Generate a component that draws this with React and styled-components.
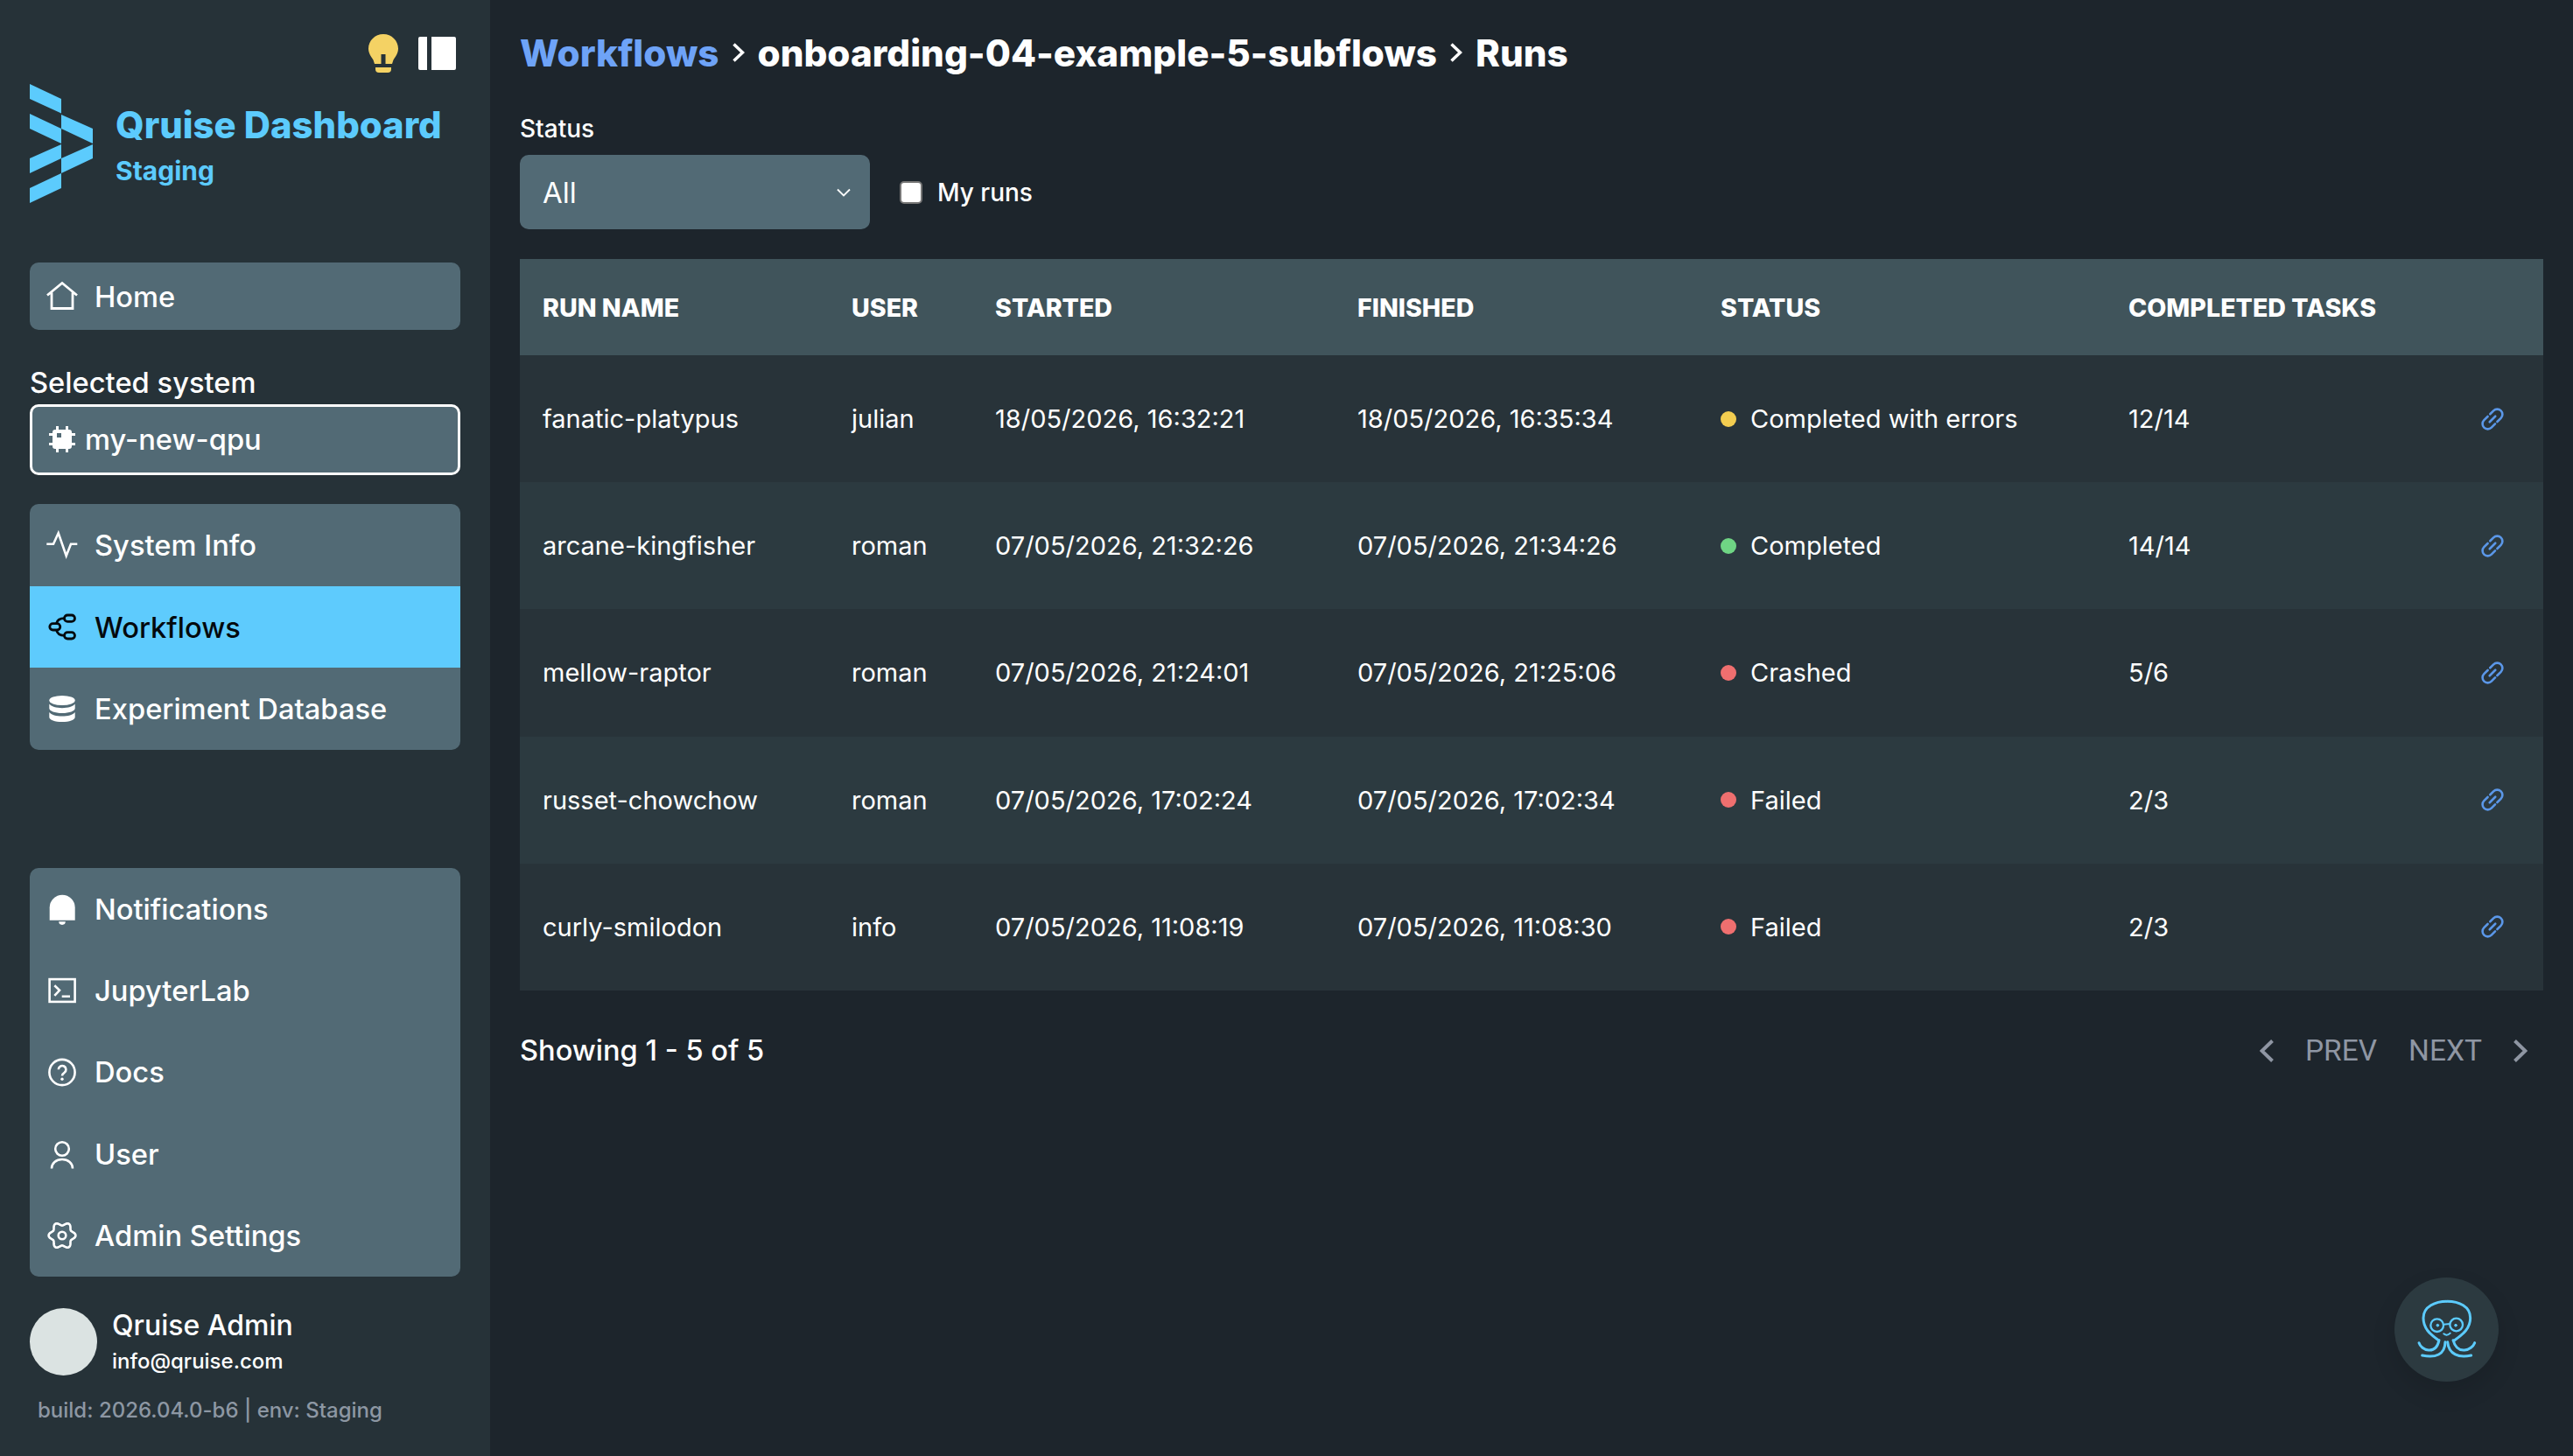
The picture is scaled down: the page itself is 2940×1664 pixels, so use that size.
import React from "react";
import styled, { createGlobalStyle } from "styled-components";

const Global = createGlobalStyle`
  html, body { margin: 0; padding: 0; background: #1d252c; }
  * { box-sizing: border-box; }
  body { font-family: Inter, "Noto Sans", sans-serif; color: #fff; overflow: hidden; }
`;

const Page = styled.div`
  width: 2940px; height: 1664px; display: grid; grid-template-columns: 560px 1fr; position: relative;
`;
const Sidebar = styled.aside`
  background: #263238; padding: 39px 34px 0; display: flex; flex-direction: column;
`;
const TopIcons = styled.div`
  display: flex; justify-content: flex-end; align-items: center; gap: 23px; height: 44px; padding-right: 5px;
`;
const Brand = styled.div`
  display: flex; gap: 26px; margin-top: 13px; height: 136px; align-items: flex-start;
`;
const BrandText = styled.div`
  display: flex; flex-direction: column; padding-top: 21px;
`;
const BrandTitle = styled.div`
  font-size: 41.800px; font-weight: 800; line-height: 52px; color: #5ccbfd; white-space: nowrap;
`;
const BrandSub = styled.div`
  font-size: 30px; font-weight: 700; line-height: 38px; margin-top: 7px; color: #5ccbfd;
`;
const NavGroup = styled.nav`
  background: #526a75; border-radius: 10px; overflow: hidden; display: flex; flex-direction: column;
  margin-top: ${p => p.$top}px;
`;
const NavItem = styled.div`
  height: ${p => p.$h}px; display: flex; align-items: center; gap: 17px; padding-left: 17px;
  font-size: 32.700px; font-weight: 500; white-space: nowrap;
  background: ${p => (p.$active ? "#5ecbfd" : "transparent")};
  color: ${p => (p.$active ? "#04090d" : "#fff")};
`;
const SysLabel = styled.div`
  margin-top: 40px; margin-bottom: 5px; line-height: 40px; font-size: 32.700px; font-weight: 500;
`;
const SysBox = styled.div`
  height: 81px; background: #526a75; border: 3px solid #fff; border-radius: 10px;
  display: flex; align-items: center; gap: 11px; padding-left: 19px; padding-bottom: 1px; font-size: 32.700px; font-weight: 500;
`;
const UserRow = styled.div`
  display: flex; gap: 17px; align-items: center; margin-top: 35px;
`;
const Avatar = styled.div`
  width: 77px; height: 77px; border-radius: 50%; background: #dbe3e2;
`;
const UserText = styled.div`
  display: flex; flex-direction: column;
`;
const UserName = styled.div`
  font-size: 32px; font-weight: 500; line-height: 42px;
`;
const UserMail = styled.div`
  font-size: 24px; font-weight: 500; line-height: 36px; margin-top: 2px;
`;
const Build = styled.div`
  margin-top: 23px; padding-left: 9px; font-size: 24px; font-weight: 500; line-height: 30px; color: #8d97a3; white-space: nowrap;
`;
const Main = styled.main`
  padding: 30px 34px 0; display: flex; flex-direction: column; background: #1d252c;
`;
const Crumbs = styled.div`
  display: flex; align-items: center; height: 60px; gap: 15px; font-size: 42.200px; font-weight: 800; white-space: nowrap;
`;
const CrumbLink = styled.span`
  color: #6ea3f7;
`;
const FilterLabel = styled.div`
  margin-top: 39px; line-height: 36px; font-size: 28px; font-weight: 500;
`;
const Filters = styled.div`
  display: flex; align-items: center; gap: 34px; margin-top: 12px;
`;
const SelectBox = styled.div`
  width: 400px; height: 85px; background: #526a75; border-radius: 10px; display: flex; align-items: center;
  justify-content: space-between; padding: 0 22px 0 26px; font-size: 33px; font-weight: 400;
`;
const Check = styled.label`
  display: flex; align-items: center; gap: 17px; font-size: 28px; font-weight: 500;
`;
const CheckInput = styled.input`
  appearance: none; margin: 0; width: 26px; height: 26px; background: #fff; border: 2px solid #767676; border-radius: 5px;
`;
const Table = styled.table`
  margin-top: 34px; width: 100%; border-collapse: collapse; table-layout: fixed;
`;
const Col = styled.col`
  width: ${p => p.$w}px;
`;
const HeadRow = styled.tr`
  height: 110px; background: #40545b;
`;
const Th = styled.th`
  padding: 0 0 0 26px; text-align: left; font-size: 28.600px; font-weight: 800; white-space: nowrap;
`;
const Row = styled.tr`
  height: 145.200px; background: ${p => (p.$even ? "#2c3a40" : "#283339")};
`;
const Td = styled.td`
  padding: 0 0 0 26px; font-size: 29px; font-weight: 400; white-space: nowrap;
`;
const LinkTd = styled.td`
  padding: 0 45px 0 0;
  svg { margin-left: auto; }
`;
const StatusCell = styled.div`
  display: flex; align-items: center; gap: 16px;
`;
const Dot = styled.span`
  width: 18px; height: 18px; border-radius: 50%; background: ${p => p.$c};
`;
const Foot = styled.div`
  margin-top: 48px; height: 40px; display: flex; justify-content: space-between; align-items: center; padding-right: 18px;
`;
const Showing = styled.div`
  font-size: 32.600px; font-weight: 500;
`;
const Pager = styled.div`
  display: flex; align-items: center; gap: 36px; font-family: Roboto, sans-serif; font-size: 33.500px; color: #8f96a3; margin-top: 2px;
`;
const Fab = styled.div`
  position: absolute; right: 85px; bottom: 85px; width: 119px; height: 119px; border-radius: 50%;
  background: #2c3a40; display: flex; align-items: center; justify-content: center;
  box-shadow: 0 12px 28px rgba(0,0,0,.12);
`;
const IconSvg = styled.svg`
  flex: none; display: block;
`;

const Icon = ({ children, size = 40, vb = "0 0 40 40", sw = 2.8, c = "currentColor" }) => (
  <IconSvg width={size} height={size} viewBox={vb} fill="none" stroke={c} strokeWidth={sw} strokeLinecap="butt" strokeLinejoin="miter">
    {children}
  </IconSvg>
);

const HomeI = () => <Icon><path d="M3 18.5 20 4.5 37 18.5M8 15.5V33.5H32V15.5" /></Icon>;
const PulseI = () => <Icon sw={2.6}><path d="M2.3 18.8H10L15.7 6.2 24.7 32.2 30 18.8H37.3" /></Icon>;
const FlowI = () => (
  <Icon>
    <rect x="22.5" y="6" width="12" height="7.4" rx="3.7" />
    <rect x="5.8" y="15.6" width="12" height="7.4" rx="3.7" />
    <rect x="22.5" y="25.6" width="12" height="7.4" rx="3.7" />
    <path d="M13.5 15.6C14.5 11 17.5 9.7 22.5 9.7M13.5 23C14.5 27.6 17.5 29.3 22.5 29.3" />
  </Icon>
);
const DbI = () => (
  <Icon sw={0}>
    <g fill="currentColor" stroke="none">
      <ellipse cx="20" cy="10.5" rx="14.7" ry="5.6" />
      <path d="M5.3 14.6V19.5C5.3 22.5 11.8 25 20 25S34.7 22.5 34.7 19.5V14.6C32.5 17.8 26.5 19.2 20 19.2S7.500 17.800 5.300 14.600Z" />
      <path d="M5.3 24V29.4C5.300 32.500 11.800 35 20 35S34.700 32.500 34.700 29.400V24C32.500 27.200 26.500 28.600 20 28.600S7.500 27.200 5.300 24Z" />
    </g>
  </Icon>
);
const BellI = () => (
  <Icon sw={0}>
    <g fill="currentColor" stroke="none">
      <path d="M5.700 32.700V18.200A14.500 14.500 0 0 1 34.700 18.200V32.700Z" />
      <path d="M16.200 34.300H23.800A3.800 3.600 0 0 1 16.200 34.300Z" />
    </g>
  </Icon>
);
const TermI = () => <Icon sw={2.6}><rect x="5.600" y="7.100" width="29" height="25.800" /><path d="M11.300 14.200 17 19.800 11.300 25.800M19.700 26.800H29" /></Icon>;
const HelpI = () => (
  <Icon sw={2.6}>
    <circle cx="20" cy="20.500" r="14.600" />
    <path d="M15.800 17.200A4.300 4.300 0 1 1 22.600 20.800C21 21.800 20 22.800 20 24.600" />
    <circle cx="20" cy="28.200" r="1.700" fill="currentColor" stroke="none" />
  </Icon>
);
const UserI = () => (
  <Icon sw={2.6}>
    <circle cx="20" cy="14" r="7.800" />
    <path d="M8 36.500C8 30.500 13 26 20 26S32 30.500 32 36.500" />
  </Icon>
);
const gearPath = (() => {
  const pts = [];
  for (let i = 0; i < 120; i++) {
    const t = (i / 120) * Math.PI * 2;
    const r = 13.4 + 2 * Math.cos(6 * t);
    pts.push(`${(20 + r * Math.cos(t)).toFixed(2)} ${(20 + r * Math.sin(t)).toFixed(2)}`);
  }
  return `M${pts.join("L")}Z`;
})();
const GearI = () => <Icon sw={2.600}><path d={gearPath} /><circle cx="20" cy="20" r="4.300" /></Icon>;
const ChipI = () => (
  <Icon size={30} vb="0 0 30 30" sw={0}>
    <g fill="currentColor" stroke="none">
      <path fillRule="evenodd" d="M7 4H23A3 3 0 0 1 26 7V23A3 3 0 0 1 23 26H7A3 3 0 0 1 4 23V7A3 3 0 0 1 7 4ZM9 8V13H14V8Z" />
      <path d="M8 0H11V4H8ZM19 0H22V4H19ZM8 26H11V30H8ZM19 26H22V30H19ZM0 8H4V11H0ZM0 19H4V22H0ZM26 8H30V11H26ZM26 19H30V22H26Z" />
    </g>
  </Icon>
);
const LinkI = () => (
  <Icon size={26} vb="1 1 24 24" sw={2.4} c="#5b97e8">
    <path strokeLinecap="round" d="M10.500 7.700 14.100 4.100A5.500 5.500 0 0 1 21.900 11.900L18 15.800M8 10.200 4.100 14.100A5.500 5.500 0 0 0 11.900 21.900L15.800 18M10 16 16 10" />
  </Icon>
);
const Chev = ({ dir = "right", h = 26, w = 16, sw = 4, c = "currentColor" }) => (
  <IconSvg width={w} height={h} viewBox={`0 0 ${w} ${h}`} fill="none" stroke={c} strokeWidth={sw}>
    {dir === "right"
      ? <path d={`M1.500 1.500 ${w - 2.500} ${h / 2} 1.500 ${h - 1.500}`} />
      : <path d={`M${w - 1.500} 1.500 2.500 ${h / 2} ${w - 1.500} ${h - 1.500}`} />}
  </IconSvg>
);
const SelectChev = () => (
  <IconSvg width="16" height="10" viewBox="0 0 16 10" fill="none" stroke="#fff" strokeWidth="1.800">
    <path d="M1 1.500 8 8.500 15 1.500" />
  </IconSvg>
);

const Logo = () => (
  <IconSvg width="72" height="136" viewBox="34 96 72 136" fill="#5ccbfd">
    <polygon points="34,96 70,113 70,129.500 34,113" />
    <polygon points="34,130 70,147 70,164 34,147" />
    <polygon points="70,131 106,147 106,164 70,147" />
    <polygon points="106,165 106,181 70,198 70,181" />
    <polygon points="70,165 70,181 34,198 34,181" />
    <polygon points="70,198 70,215 34,232 34,215" />
  </IconSvg>
);
const Bulb = () => (
  <IconSvg width="34" height="44" viewBox="0 0 34 44" fill="#f4d264">
    <path fillRule="evenodd" d="M17 0C26.500 0 34 7.500 34 16.500C34 21.500 31.500 25 28.500 29.500L27 34H19.500V23H14.500V34H7L5.500 29.500C2.500 25 0 21.500 0 16.500C0 7.500 7.500 0 17 0Z" />
    <path d="M8 38H26V40A4 4 0 0 1 22 44H12A4 4 0 0 1 8 40Z" />
  </IconSvg>
);
const PanelIcon = () => (
  <IconSvg width="43" height="38" viewBox="0 0 43 38" fill="#fff">
    <path d="M2 0H10V38H2A2 2 0 0 1 0 36V2A2 2 0 0 1 2 0ZM15 0H41A2 2 0 0 1 43 2V36A2 2 0 0 1 41 38H15Z" />
  </IconSvg>
);
const Octopus = () => (
  <IconSvg width="74" height="74" viewBox="778 1000 222 222" fill="none" stroke="#5ccbfd" strokeWidth="9" strokeLinecap="round">
    <path d="M860 1146C830 1125 808 1105 808 1070C808 1030 850 1013 890 1013C930 1013 969 1030 969 1070C969 1105 945 1125 915 1146" />
    <path d="M793 1155C800 1180 850 1200 862 1146" />
    <path d="M804 1198C850 1208 882 1195 883 1152" />
    <path d="M984 1155C975 1180 925 1200 910 1146" />
    <path d="M972 1198C930 1208 895 1195 891 1152" />
    <circle cx="855" cy="1095" r="22" strokeWidth="7" />
    <circle cx="921" cy="1093" r="22" strokeWidth="7" />
    <circle cx="857" cy="1095" r="4" fill="#5ccbfd" strokeWidth="3" />
    <circle cx="919" cy="1095" r="4" fill="#5ccbfd" strokeWidth="3" />
    <path d="M877 1092 899 1090M878 1124Q889 1133 900 1122" strokeWidth="6" />
  </IconSvg>
);

const runs = [
  ["fanatic-platypus", "julian", "18/05/2026, 16:32:21", "18/05/2026, 16:35:34", "#f3cd50", "Completed with errors", "12/14"],
  ["arcane-kingfisher", "roman", "07/05/2026, 21:32:26", "07/05/2026, 21:34:26", "#6fd584", "Completed", "14/14"],
  ["mellow-raptor", "roman", "07/05/2026, 21:24:01", "07/05/2026, 21:25:06", "#ef6f6f", "Crashed", "5/6"],
  ["russet-chowchow", "roman", "07/05/2026, 17:02:24", "07/05/2026, 17:02:34", "#ef6f6f", "Failed", "2/3"],
  ["curly-smilodon", "info", "07/05/2026, 11:08:19", "07/05/2026, 11:08:30", "#ef6f6f", "Failed", "2/3"],
];
const colWidths = [353, 164, 414, 415, 466, 405, 95];

export default function App() {
  return (
    <Page>
      <Global />
      <Sidebar>
        <TopIcons><Bulb /><PanelIcon /></TopIcons>
        <Brand>
          <Logo />
          <BrandText>
            <BrandTitle>Qruise Dashboard</BrandTitle>
            <BrandSub>Staging</BrandSub>
          </BrandText>
        </Brand>
        <NavGroup $top={68}>
          <NavItem $h={77}><HomeI />Home</NavItem>
        </NavGroup>
        <SysLabel>Selected system</SysLabel>
        <SysBox><ChipI />my-new-qpu</SysBox>
        <NavGroup $top={33}>
          <NavItem $h={94}><PulseI />System Info</NavItem>
          <NavItem $h={93} $active><FlowI />Workflows</NavItem>
          <NavItem $h={94}><DbI />Experiment Database</NavItem>
        </NavGroup>
        <NavGroup $top={135}>
          <NavItem $h={93.4}><BellI />Notifications</NavItem>
          <NavItem $h={93.4}><TermI />JupyterLab</NavItem>
          <NavItem $h={93.4}><HelpI />Docs</NavItem>
          <NavItem $h={93.4}><UserI />User</NavItem>
          <NavItem $h={93.4}><GearI />Admin Settings</NavItem>
        </NavGroup>
        <UserRow>
          <Avatar />
          <UserText>
            <UserName>Qruise Admin</UserName>
            <UserMail>info@qruise.com</UserMail>
          </UserText>
        </UserRow>
        <Build>build: 2026.04.0-b6 | env: Staging</Build>
      </Sidebar>
      <Main>
        <Crumbs>
          <CrumbLink>Workflows</CrumbLink>
          <Chev w={14} h={22} sw={3.5} />
          <span>onboarding-04-example-5-subflows</span>
          <Chev w={14} h={22} sw={3.5} />
          <span>Runs</span>
        </Crumbs>
        <FilterLabel>Status</FilterLabel>
        <Filters>
          <SelectBox>All<SelectChev /></SelectBox>
          <Check><CheckInput type="checkbox" />My runs</Check>
        </Filters>
        <Table>
          <colgroup>{colWidths.map((w, i) => <Col key={i} $w={w} />)}</colgroup>
          <thead>
            <HeadRow>
              <Th>RUN NAME</Th><Th>USER</Th><Th>STARTED</Th><Th>FINISHED</Th><Th>STATUS</Th><Th>COMPLETED TASKS</Th><Th />
            </HeadRow>
          </thead>
          <tbody>
            {runs.map((r, i) => (
              <Row key={r[0]} $even={i % 2 === 1}>
                <Td>{r[0]}</Td><Td>{r[1]}</Td><Td>{r[2]}</Td><Td>{r[3]}</Td>
                <Td><StatusCell><Dot $c={r[4]} />{r[5]}</StatusCell></Td>
                <Td>{r[6]}</Td>
                <LinkTd><LinkI /></LinkTd>
              </Row>
            ))}
          </tbody>
        </Table>
        <Foot>
          <Showing>Showing 1 - 5 of 5</Showing>
          <Pager><Chev dir="left" />PREV<span>NEXT</span><Chev /></Pager>
        </Foot>
      </Main>
      <Fab><Octopus /></Fab>
    </Page>
  );
}
